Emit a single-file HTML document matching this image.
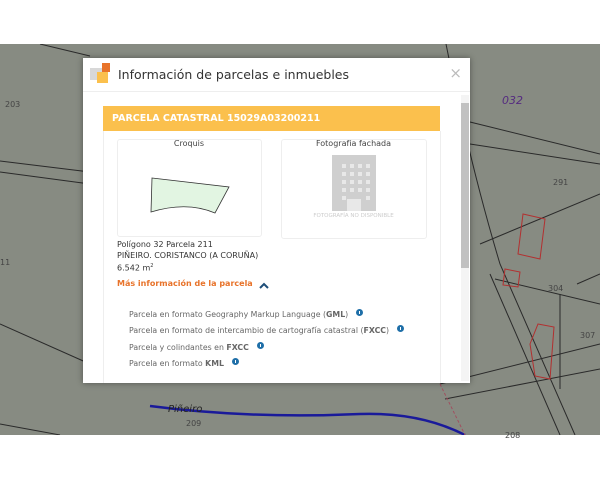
<!DOCTYPE html>
<html><head><meta charset="utf-8"><style>
body{margin:0;width:600px;height:480px;background:#fff;position:relative;overflow:hidden;font-family:"DejaVu Sans","Liberation Sans",sans-serif}
.map{position:absolute;left:0;top:44px;width:600px;height:391px;background:#878b82}
.dlg{position:absolute;left:83px;top:58px;width:387px;height:325px;background:#fff;box-shadow:0 0 6px rgba(0,0,0,.4);overflow:hidden}
.t{position:absolute;font-size:8px;color:#444;white-space:nowrap}
.i{display:inline-block;width:7px;height:7px;border-radius:50%;background:#1f6fa8;margin-left:8px;vertical-align:1px;position:relative}
.i:after{content:"";position:absolute;left:3px;top:2px;width:1px;height:3px;background:#fff}
.w{position:absolute;width:4px;height:4px;background:#e8e8e8}
</style></head><body>
<div class="map">
<svg width="600" height="391" style="position:absolute;left:0;top:0">
<g stroke="#2a2a2a" stroke-width="1" fill="none">
<path d="M0 117 L90 128"/><path d="M0 128 L90 140"/>
<path d="M0 280 L90 320"/><path d="M0 380 L60 391"/>
<path d="M40 0 L90 12"/>
<path d="M446 0 Q470 120 500 220 L575 391"/><path d="M490 230 L560 391"/>
<path d="M470 100 L600 120"/><path d="M470 78 L600 110"/>
<path d="M480 200 L600 150"/><path d="M495 235 L600 260"/>
<path d="M577 240 L600 230"/><path d="M560 250 L560 345"/>
<path d="M440 340 L600 300"/><path d="M445 355 L600 325"/>
</g>
<g stroke="#b23030" stroke-width="1" fill="none">
<path d="M523 170 L545 175 L540 215 L518 210 Z"/><path d="M505 225 L520 228 L518 243 L503 241Z"/>
<path d="M538 280 L554 283 L550 335 L535 332 L530 300Z"/>
</g>
<path d="M150 362 Q250 375 360 370 Q420 368 465 391" stroke="#1a1a9a" stroke-width="2.5" fill="none"/>
<path d="M440 340 L465 391" stroke="#a05060" stroke-dasharray="3,2" fill="none"/>
</svg>
<div class="t" style="left:5px;top:56px">203</div>
<div class="t" style="left:0;top:214px">11</div>
<div class="t" style="left:502px;top:50px;font-size:11px;color:#552b80;font-style:italic">032</div>
<div class="t" style="left:553px;top:134px">291</div>
<div class="t" style="left:548px;top:240px">304</div>
<div class="t" style="left:580px;top:287px">307</div>
<div class="t" style="left:168px;top:360px;font-size:10px;font-style:italic;color:#222">Piñeiro</div>
<div class="t" style="left:186px;top:375px">209</div>
<div class="t" style="left:505px;top:387px">208</div>
</div>
<div class="dlg">
<div style="position:absolute;left:7px;top:10px;width:12px;height:12px;background:#d8d8d8"></div>
<div style="position:absolute;left:19px;top:5px;width:8px;height:9px;background:#e8732a"></div>
<div style="position:absolute;left:14px;top:14px;width:11px;height:11px;background:#fbc04d"></div>
<div style="position:absolute;left:35px;top:9px;font-size:12.5px;color:#333">Información de parcelas e inmuebles</div>
<div style="position:absolute;right:8px;top:6px;font-size:15px;color:#bbb">×</div>
<div style="position:absolute;left:0;top:33px;width:387px;height:1px;background:#eee"></div>
<div style="position:absolute;left:378px;top:37px;width:8px;height:286px;background:#f4f4f4"></div>
<div style="position:absolute;left:378px;top:45px;width:8px;height:165px;background:#c1c1c1"></div>
<div style="position:absolute;left:20px;top:48px;width:337px;height:25px;background:#fbc04d;color:#fff;font-size:9.5px;font-weight:bold;line-height:25px;text-indent:9px">PARCELA CATASTRAL 15029A03200211</div>
<div style="position:absolute;left:20px;top:73px;width:336px;height:260px;border-left:1px solid #eee;border-right:1px solid #eee"></div>
<div style="position:absolute;left:34px;top:81px;width:144px;text-align:center;font-size:8px;color:#444">Croquis</div>
<div style="position:absolute;left:34px;top:81px;width:143px;height:96px;border:1px solid #eee;border-radius:3px"></div>
<svg style="position:absolute;left:34px;top:81px" width="144" height="97"><path d="M35 39 L112 48 L98 74 Q70 62 34 73 Z" fill="#e2f5e2" stroke="#333" stroke-width="0.8"/></svg>
<div style="position:absolute;left:198px;top:81px;width:145px;text-align:center;font-size:8px;color:#444">Fotografía fachada</div>
<div style="position:absolute;left:198px;top:81px;width:144px;height:98px;border:1px solid #eee;border-radius:3px"></div>
<div style="position:absolute;left:249px;top:97px;width:44px;height:56px;background:#cfcfcf">
<div class="w" style="left:10px;top:9px"></div><div class="w" style="left:18px;top:9px"></div><div class="w" style="left:26px;top:9px"></div><div class="w" style="left:34px;top:9px"></div>
<div class="w" style="left:10px;top:17px"></div><div class="w" style="left:18px;top:17px"></div><div class="w" style="left:26px;top:17px"></div><div class="w" style="left:34px;top:17px"></div>
<div class="w" style="left:10px;top:25px"></div><div class="w" style="left:18px;top:25px"></div><div class="w" style="left:26px;top:25px"></div><div class="w" style="left:34px;top:25px"></div>
<div class="w" style="left:10px;top:33px"></div><div class="w" style="left:18px;top:33px"></div><div class="w" style="left:26px;top:33px"></div><div class="w" style="left:34px;top:33px"></div>
<div class="w" style="left:10px;top:41px"></div><div class="w" style="left:34px;top:41px"></div>
</div>
<div style="position:absolute;left:264px;top:141px;width:14px;height:12px;background:#e8e8e8"></div>
<div style="position:absolute;left:198px;top:155px;width:145px;text-align:center;font-size:5.5px;color:#ccc">FOTOGRAFÍA NO DISPONIBLE</div>
<div style="position:absolute;left:34px;top:181px;font-size:8px;color:#333;line-height:11px">Polígono 32 Parcela 211<br>PIÑEIRO. CORISTANCO (A CORUÑA)<br>6.542 m<sup style="font-size:5px">2</sup></div>
<div style="position:absolute;left:34px;top:221px;font-size:8px;color:#e8732a;font-weight:bold">Más información de la parcela</div>
<svg style="position:absolute;left:176px;top:224px" width="10" height="7"><path d="M1 6 L5 2 L9 6" stroke="#1e4e79" stroke-width="2" fill="none"/></svg>
<div style="position:absolute;left:46px;top:249px;font-size:7.8px;color:#666;line-height:16.3px">
Parcela en formato Geography Markup Language (<b>GML</b>)<span class="i"></span><br>
Parcela en formato de intercambio de cartografía catastral (<b>FXCC</b>)<span class="i"></span><br>
Parcela y colindantes en <b>FXCC</b><span class="i"></span><br>
Parcela en formato <b>KML</b><span class="i"></span></div>
</div>
</body></html>
